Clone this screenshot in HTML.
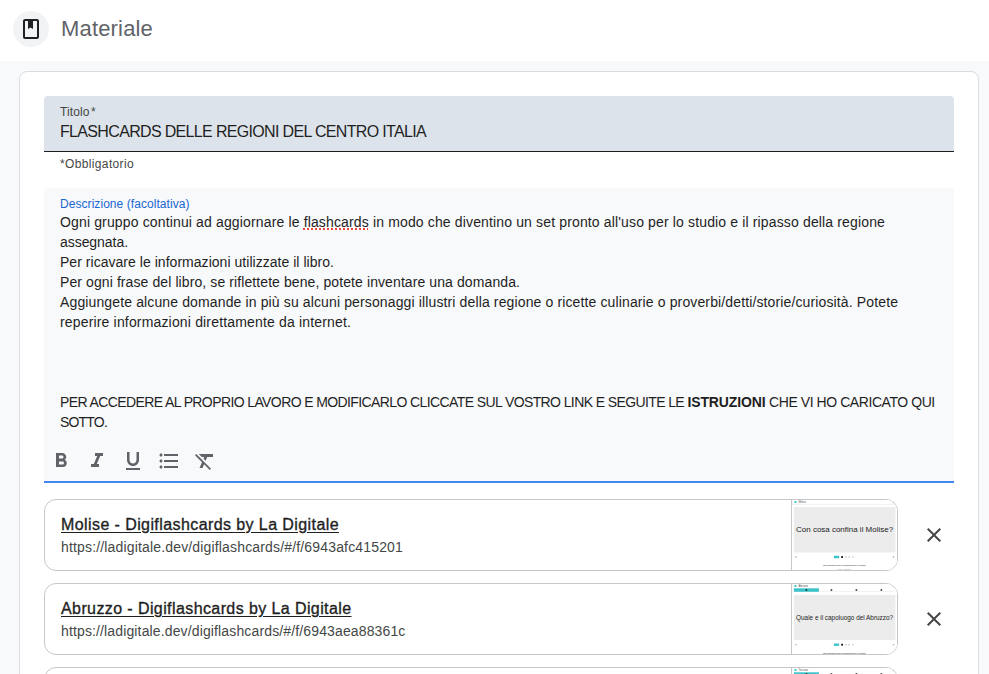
<!DOCTYPE html>
<html lang="it">
<head>
<meta charset="utf-8">
<title>Materiale</title>
<style>
*{box-sizing:border-box;margin:0;padding:0}
html,body{width:989px;height:674px;overflow:hidden;background:#f8f9fa;font-family:"Liberation Sans",Arial,sans-serif;color:#1f1f1f}
.hdr{position:absolute;left:0;top:0;width:989px;height:61px;background:#fff}
.ico{position:absolute;left:13px;top:11px;width:36px;height:36px;border-radius:50%;background:#f1f3f4}
.ico svg{position:absolute;left:6px;top:6px}
.ttl{position:absolute;left:61px;top:15px;font-size:22px;line-height:28px;color:#5f6368}
.card{position:absolute;left:19px;top:71px;width:960px;height:640px;background:#fff;border:1px solid #dadce0;border-radius:8px}
.f1{position:absolute;left:44px;top:96px;width:910px;height:56px;background:#dde3ea;border-bottom:1px solid #1f1f1f;border-radius:4px 4px 0 0}
.lbl{position:absolute;left:16px;top:9px;font-size:12px;line-height:14px;color:#444746}
.val{position:absolute;left:16px;top:26px;font-size:16px;line-height:20px;color:#1f1f1f}
.req{position:absolute;left:60px;top:157px;font-size:12px;line-height:14px;color:#444746}
.f2{position:absolute;left:44px;top:188px;width:910px;height:295px;background:#f8f9fa;border-bottom:2px solid #4285f4;border-radius:4px 4px 0 0}
.f2 .lbl{color:#1967d2;top:9px}
.txt{position:absolute;left:16px;top:24px;width:880px;font-size:14px;line-height:20px;color:#1f1f1f}
.txt p{height:20px;white-space:nowrap}
.sp{text-decoration:underline dotted #e8453c 1.500px;text-underline-offset:1.200px}
.tb{position:absolute;left:.2px;top:257px;height:32px}
.tb svg{position:absolute;top:4px}
.att{position:absolute;left:44px;width:854px;height:72px;border:1px solid #c4c7c5;border-radius:12px;background:#fff;overflow:hidden}
.att .t{position:absolute;left:16px;top:15px;text-underline-offset:2px;text-decoration-thickness:1px;font-size:16px;line-height:20px;font-weight:normal;-webkit-text-stroke:.35px #1f1f1f;color:#1f1f1f;text-decoration:underline}
.att .u{position:absolute;left:16px;top:38px;font-size:14px;line-height:18px;color:#444746}
.th{position:absolute;left:746px;top:-1px;width:107px;height:72px;border-left:1px solid #c4c7c5;background:#fff}
.x{position:absolute;left:922px}
#h1{letter-spacing:0.168px}#t1{letter-spacing:0.115px}#t2{letter-spacing:-0.664px}#t3{letter-spacing:0.356px}#t4{letter-spacing:0.058px}#l1{letter-spacing:0.144px}#l2{letter-spacing:-0.050px}#l3{letter-spacing:0.034px}#l4{letter-spacing:0.094px}#l5{letter-spacing:0.129px}#l6{letter-spacing:0.165px}#l7a{letter-spacing:-0.605px}#l7b{letter-spacing:-0.113px}#l7c{letter-spacing:-0.434px}#l8{letter-spacing:-0.810px}#a1{letter-spacing:0.412px}#a2{letter-spacing:0.161px}#a3{letter-spacing:0.403px}#a4{letter-spacing:0.136px}
</style>
</head>
<body>
<div class="hdr">
  <div class="ico"><svg width="24" height="24" viewBox="0 0 24 24"><path fill="#202124" d="M18 2H6c-1.1 0-2 .9-2 2v16c0 1.1.9 2 2 2h12c1.100 0 2-.9 2-2V4c0-1.100-.9-2-2-2zm0 18H6V4h3v8l2.500-1.500L14 12V4h4v16z"/></g></svg></div>
  <div class="ttl"><span id="h1">Materiale</span></div>
</div>
<div class="card"></div>
<div class="f1"><div class="lbl"><span id="t1">Titolo</span><span id="t1b" style="margin-left:1.500px">*</span></div><div class="val"><span id="t2">FLASHCARDS DELLE REGIONI DEL CENTRO ITALIA</span></div></div>
<div class="req"><span id="t3">*Obbligatorio</span></div>
<div class="f2">
  <div class="lbl"><span id="t4">Descrizione (facoltativa)</span></div>
  <div class="txt">
    <p><span id="l1">Ogni gruppo continui ad aggiornare le <span class="sp">flashcards</span> in modo che diventino un set pronto all'uso per lo studio e il ripasso della regione</span></p>
    <p><span id="l2">assegnata.</span></p>
    <p><span id="l3">Per ricavare le informazioni utilizzate il libro.</span></p>
    <p><span id="l4">Per ogni frase del libro, se riflettete bene, potete inventare una domanda.</span></p>
    <p><span id="l5">Aggiungete alcune domande in più su alcuni personaggi illustri della regione o ricette culinarie o proverbi/detti/storie/curiosità. Potete</span></p>
    <p><span id="l6">reperire informazioni direttamente da internet.</span></p>
    <p></p><p></p><p></p>
    <p><span id="l7a">PER ACCEDERE AL PROPRIO LAVORO E MODIFICARLO CLICCATE SUL VOSTRO LINK E SEGUITE LE </span><b id="l7b">ISTRUZIONI</b><span id="l7c"> CHE VI HO CARICATO QUI</span></p>
    <p><span id="l8">SOTTO.</span></p>
  </div>
  <div class="tb">
    <svg style="left:5px" width="24" height="24" viewBox="0 0 24 24"><path fill="#5f6368" d="M15.600 10.790c.970-.670 1.650-1.770 1.650-2.790 0-2.260-1.750-4-4-4H7v14h7.040c2.090 0 3.710-1.700 3.710-3.790 0-1.520-.860-2.820-2.150-3.420zM10 6.500h3c.830 0 1.500.670 1.500 1.500s-.670 1.500-1.500 1.500h-3v-3zm3.500 9H10v-3h3.500c.830 0 1.500.670 1.500 1.500s-.670 1.500-1.500 1.500z"/></svg>
    <svg style="left:41px" width="24" height="24" viewBox="0 0 24 24"><path fill="#5f6368" d="M10 4v3h2.210l-3.420 8H6v3h8v-3h-2.210l3.420-8H18V4z"/></svg>
    <svg style="left:77px" width="24" height="24" viewBox="0 0 24 24"><path fill="#5f6368" d="M12 17c3.310 0 6-2.690 6-6V3h-2.500v8c0 1.930-1.570 3.500-3.500 3.500S8.500 12.930 8.500 11V3H6v8c0 3.310 2.690 6 6 6zm-7 2v2h14v-2H5z"/></svg>
    <svg style="left:113px" width="24" height="24" viewBox="0 0 24 24"><path fill="#5f6368" d="M4 10.500c-.830 0-1.500.670-1.500 1.500s.670 1.500 1.500 1.500 1.500-.670 1.500-1.500-.670-1.500-1.500-1.500zm0-6c-.830 0-1.500.670-1.500 1.500S3.170 7.500 4 7.500 5.500 6.830 5.500 6 4.830 4.500 4 4.500zm0 12c-.830 0-1.500.680-1.500 1.500s.680 1.500 1.500 1.500 1.500-.680 1.500-1.500-.670-1.500-1.500-1.500zM7 19h14v-2H7v2zm0-6h14v-2H7v2zm0-8v2h14V5H7z"/></svg>
    <svg style="left:149px" width="24" height="24" viewBox="0 0 24 24"><path fill="#5f6368" d="M3.270 5L2 6.270l6.970 6.970L6.500 19h3l1.570-3.660L16.730 21 18 19.730 3.550 5.270 3.270 5zM6 5v.18L8.820 8h2.400l-.72 1.680 2.100 2.100L14.210 8H20V5H6z"/></svg>
  </div>
</div>

<div class="att" style="top:499px">
  <div class="t"><span id="a1">Molise - Digiflashcards by La Digitale</span></div>
  <div class="u"><span id="a2">https://ladigitale.dev/digiflashcards/#/f/6943afc415201</span></div>
  <div class="th"><svg width="106" height="72" viewBox="0 0 106 72" style="position:absolute;left:0;top:0"><rect x="0" y="0" width="106" height="72" fill="#fff"/><g transform="translate(-1.1,0)"><rect x="3.600" y="2.100" width="1.900" height="1.900" fill="#2fc4c9"/><text x="7.500" y="3.900" font-family="Liberation Sans, sans-serif" font-size="2.600" fill="#555">Molise</text><rect x="102" y="2.500" width="1.500" height="1.500" fill="none" stroke="#999" stroke-width=".3"/><rect x="0" y="5.300" width="106" height=".4" fill="#ddd"/><rect x="3" y="8.0" width="101.500" height="45.5" fill="#ececec"/><text x="53.700" y="33.2" text-anchor="middle" textLength="97" lengthAdjust="spacingAndGlyphs" font-family="Liberation Sans, sans-serif" font-size="7.600" fill="#222">Con cosa confina il Molise?</text><rect x="43" y="56.8" width="5.200" height="2.400" fill="#3cc3c9"/><rect x="50.300" y="57.1" width="1.800" height="1.800" fill="#111"/><circle cx="55.0" cy="58.0" r=".8" fill="#bbb"/><circle cx="58.2" cy="58.0" r=".8" fill="#bbb"/><circle cx="62.0" cy="58.0" r=".8" fill="#bbb"/><path d="M4 58.0l1.500 -.9v1.800z" fill="#999"/><path d="M103.500 58.0l-1.500 -.9v1.800z" fill="#999"/><text x="53.500" y="67.1" text-anchor="middle" textLength="43" lengthAdjust="spacingAndGlyphs" font-family="Liberation Sans, sans-serif" font-size="2" fill="#222">Carte flashcards create con Digiflashcards by La Digitale</text><text x="53.500" y="70.500" text-anchor="middle" textLength="13" lengthAdjust="spacingAndGlyphs" font-family="Liberation Sans, sans-serif" font-size="2" fill="#999">2025 - La Digitale</text></g></svg></div>
</div>
<svg class="x" style="top:523px" width="24" height="24" viewBox="0 0 24 24"><path fill="#444746" d="M19 6.410L17.590 5 12 10.590 6.410 5 5 6.410 10.590 12 5 17.590 6.410 19 12 13.410 17.590 19 19 17.590 13.410 12z"/></svg>

<div class="att" style="top:583px">
  <div class="t"><span id="a3">Abruzzo - Digiflashcards by La Digitale</span></div>
  <div class="u"><span id="a4">https://ladigitale.dev/digiflashcards/#/f/6943aea88361c</span></div>
  <div class="th"><svg width="106" height="72" viewBox="0 0 106 72" style="position:absolute;left:0;top:0"><rect x="0" y="0" width="106" height="72" fill="#fff"/><g transform="translate(-1.1,0)"><rect x="3.600" y="2.100" width="1.900" height="1.900" fill="#2fc4c9"/><text x="7.500" y="3.900" font-family="Liberation Sans, sans-serif" font-size="2.600" fill="#555">Abruzzo</text><rect x="102" y="2.500" width="1.500" height="1.500" fill="none" stroke="#999" stroke-width=".3"/><rect x="3" y="5.300" width="25" height="3.500" fill="#3cc3c9"/><rect x="28" y="8.500" width="75" height=".4" fill="#ddd"/><rect x="14.7" y="6.300" width="1.600" height="1.400" fill="#111"/><rect x="39.7" y="6.300" width="1.600" height="1.400" fill="#111"/><rect x="64.7" y="6.300" width="1.600" height="1.400" fill="#111"/><rect x="89.7" y="6.300" width="1.600" height="1.400" fill="#111"/><rect x="3" y="12.0" width="101.500" height="45.0" fill="#ececec"/><text x="53.700" y="36.6" text-anchor="middle" textLength="97" lengthAdjust="spacingAndGlyphs" font-family="Liberation Sans, sans-serif" font-size="6.500" fill="#222">Quale e il capoluogo del Abruzzo?</text><rect x="43" y="60.5" width="5.200" height="2.400" fill="#3cc3c9"/><rect x="50.300" y="60.8" width="1.800" height="1.800" fill="#111"/><circle cx="55.0" cy="61.7" r=".8" fill="#bbb"/><circle cx="58.2" cy="61.7" r=".8" fill="#bbb"/><circle cx="62.0" cy="61.7" r=".8" fill="#bbb"/><path d="M4 61.7l1.500 -.9v1.800z" fill="#999"/><path d="M103.500 61.7l-1.500 -.9v1.800z" fill="#999"/><text x="53.500" y="70.9" text-anchor="middle" textLength="43" lengthAdjust="spacingAndGlyphs" font-family="Liberation Sans, sans-serif" font-size="2" fill="#222">Carte flashcards create con Digiflashcards by La Digitale</text></g></svg></div>
</div>
<svg class="x" style="top:607px" width="24" height="24" viewBox="0 0 24 24"><path fill="#444746" d="M19 6.410L17.590 5 12 10.590 6.410 5 5 6.410 10.590 12 5 17.590 6.410 19 12 13.410 17.590 19 19 17.590 13.410 12z"/></svg>

<div class="att" style="top:667px">
  <div class="th"><svg width="106" height="72" viewBox="0 0 106 72" style="position:absolute;left:0;top:0"><rect x="0" y="0" width="106" height="72" fill="#fff"/><g transform="translate(-1.1,0)"><rect x="3.600" y="2.100" width="1.900" height="1.900" fill="#2fc4c9"/><text x="7.500" y="3.900" font-family="Liberation Sans, sans-serif" font-size="2.600" fill="#555">Toscana</text><rect x="102" y="2.500" width="1.500" height="1.500" fill="none" stroke="#999" stroke-width=".3"/><rect x="3" y="5.300" width="25" height="3.500" fill="#3cc3c9"/><rect x="28" y="8.500" width="75" height=".4" fill="#ddd"/><rect x="14.7" y="6.300" width="1.600" height="1.400" fill="#111"/><rect x="39.7" y="6.300" width="1.600" height="1.400" fill="#111"/><rect x="64.7" y="6.300" width="1.600" height="1.400" fill="#111"/><rect x="89.7" y="6.300" width="1.600" height="1.400" fill="#111"/><rect x="3" y="12.0" width="101.500" height="45.0" fill="#ececec"/><text x="53.700" y="36.6" text-anchor="middle" textLength="97" lengthAdjust="spacingAndGlyphs" font-family="Liberation Sans, sans-serif" font-size="6.500" fill="#222">Qual è il capoluogo della Toscana?</text><rect x="43" y="60.5" width="5.200" height="2.400" fill="#3cc3c9"/><rect x="50.300" y="60.8" width="1.800" height="1.800" fill="#111"/><circle cx="55.0" cy="61.7" r=".8" fill="#bbb"/><circle cx="58.2" cy="61.7" r=".8" fill="#bbb"/><circle cx="62.0" cy="61.7" r=".8" fill="#bbb"/><path d="M4 61.7l1.500 -.9v1.800z" fill="#999"/><path d="M103.500 61.7l-1.500 -.9v1.800z" fill="#999"/><text x="53.500" y="70.9" text-anchor="middle" textLength="43" lengthAdjust="spacingAndGlyphs" font-family="Liberation Sans, sans-serif" font-size="2" fill="#222">Carte flashcards create con Digiflashcards by La Digitale</text></g></svg></div>
</div>
</body>
</html>
